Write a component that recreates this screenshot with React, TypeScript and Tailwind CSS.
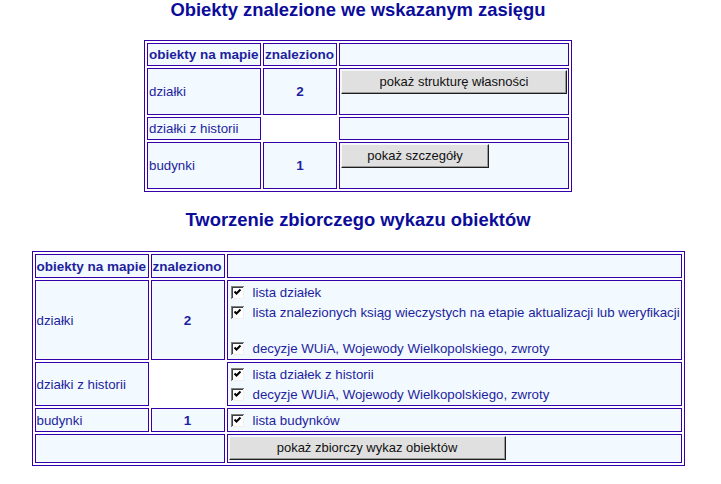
import React from 'react';

const BORDER = 'border border-[#3300aa]';
const CELL = `${BORDER} bg-[#f2faff] p-[1px] align-middle whitespace-nowrap overflow-hidden`;
const HEAD = 'font-bold text-[13.5px]';

const Checkbox = () => (
  <svg width="13" height="13" viewBox="0 0 13 13" className="shrink-0">
    <rect x="0" y="0" width="13" height="13" fill="#808080" />
    <rect x="1" y="1" width="12" height="12" fill="#f0f0f0" />
    <rect x="1" y="1" width="11" height="11" fill="#404040" />
    <rect x="2" y="2" width="10" height="10" fill="#ffffff" />
    <path d="M3.5 5.5 L5.5 7.5 L9.5 3.5" stroke="#000" strokeWidth="2" fill="none" />
  </svg>
);

const CheckLine = ({ label }: { label: string }) => (
  <div className="flex items-center h-[20px]">
    <span className="ml-[2px] mr-[9px] flex">
      <Checkbox />
    </span>
    <span className="whitespace-nowrap">{label}</span>
  </div>
);

const OldButton = ({ label, width }: { label: string; width: string }) => (
  <button
    className={`${width} h-[24px] bg-[#e0e0e0] border border-t-[#f6f6f6] border-l-[#f6f6f6] border-r-[#1e1e1e] border-b-[#1e1e1e] shadow-[inset_-1px_-1px_0_#9a9a9a] text-[13px] text-[#111] font-['Liberation_Sans',Arial,sans-serif] leading-none pb-[2px]`}
  >
    {label}
  </button>
);

export default function App() {
  return (
    <div className="w-[716px] bg-white flex flex-col items-center font-['Liberation_Sans',Arial,sans-serif] text-[13.3px] leading-[15px] text-[#1f1f9e] pb-[17px]">
      <h1 className="h-[20px] text-[18.4px] leading-[20px] font-bold text-[#0c0c9a]">
        Obiekty znalezione we wskazanym zasięgu
      </h1>

      <table className={`mt-[20px] w-[428px] table-fixed border-separate border-spacing-[2px] ${BORDER} bg-white`}>
        <tbody>
          <tr>
            <td className={`${CELL} w-[114px] h-[23px] ${HEAD}`}>obiekty na mapie</td>
            <td className={`${CELL} w-[74px] h-[23px] ${HEAD}`}>znaleziono</td>
            <td className={`${CELL} h-[23px]`}></td>
          </tr>
          <tr>
            <td className={`${CELL} h-[47px]`}>działki</td>
            <td className={`${CELL} h-[47px] text-center ${HEAD}`}>2</td>
            <td className={`${CELL} h-[47px] !align-top`}>
              <OldButton label="pokaż strukturę własności" width="w-full" />
            </td>
          </tr>
          <tr>
            <td className={`${CELL} h-[23px]`}>działki z historii</td>
            <td className="p-[1px]"></td>
            <td className={`${CELL} h-[23px]`}></td>
          </tr>
          <tr>
            <td className={`${CELL} h-[47px]`}>budynki</td>
            <td className={`${CELL} h-[47px] text-center ${HEAD}`}>1</td>
            <td className={`${CELL} h-[47px] !align-top`}>
              <OldButton label="pokaż szczegóły" width="w-[148px]" />
            </td>
          </tr>
        </tbody>
      </table>

      <h2 className="mt-[18px] h-[20px] text-[18.4px] leading-[20px] font-bold text-[#0c0c9a]">
        Tworzenie zbiorczego wykazu obiektów
      </h2>

      <table className={`mt-[21px] w-[653px] table-fixed border-separate border-spacing-[2px] ${BORDER} bg-white`}>
        <tbody>
          <tr>
            <td className={`${CELL} w-[114px] h-[24px] ${HEAD}`}>obiekty na mapie</td>
            <td className={`${CELL} w-[74px] h-[24px] ${HEAD}`}>znaleziono</td>
            <td className={`${CELL} h-[24px]`}></td>
          </tr>
          <tr>
            <td className={`${CELL} h-[80px]`}>działki</td>
            <td className={`${CELL} h-[80px] text-center ${HEAD}`}>2</td>
            <td className={`${CELL} h-[80px]`}>
              <CheckLine label="lista działek" />
              <CheckLine label="lista znalezionych ksiąg wieczystych na etapie aktualizacji lub weryfikacji" />
              <div className="h-[16px]" />
              <CheckLine label="decyzje WUiA, Wojewody Wielkopolskiego, zwroty" />
            </td>
          </tr>
          <tr>
            <td className={`${CELL} h-[44px]`}>działki z historii</td>
            <td className="p-[1px]"></td>
            <td className={`${CELL} h-[44px]`}>
              <CheckLine label="lista działek z historii" />
              <CheckLine label="decyzje WUiA, Wojewody Wielkopolskiego, zwroty" />
            </td>
          </tr>
          <tr>
            <td className={`${CELL} h-[24px]`}>budynki</td>
            <td className={`${CELL} h-[24px] text-center ${HEAD}`}>1</td>
            <td className={`${CELL} h-[24px]`}>
              <CheckLine label="lista budynków" />
            </td>
          </tr>
          <tr>
            <td colSpan={2} className={`${CELL} h-[29px]`}></td>
            <td className={`${CELL} h-[29px] !align-top`}>
              <OldButton label="pokaż zbiorczy wykaz obiektów" width="w-[277px]" />
            </td>
          </tr>
        </tbody>
      </table>
    </div>
  );
}
